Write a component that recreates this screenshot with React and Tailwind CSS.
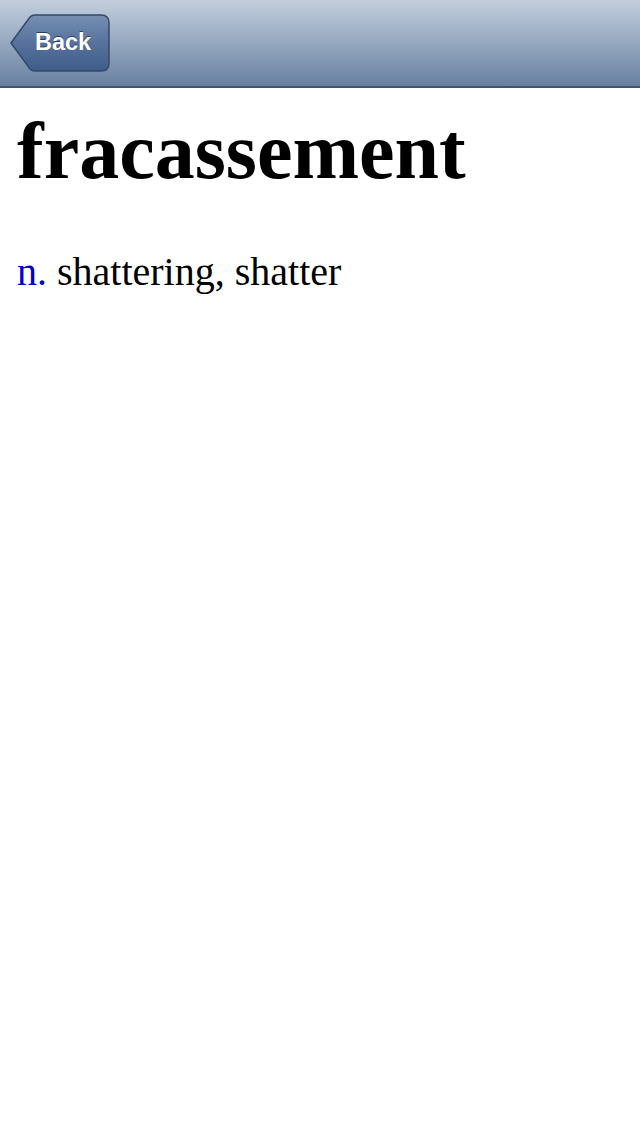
export default function App() {
  return (
    <div className="min-h-screen bg-white">
      <div className="h-[88px] bg-gradient-to-b from-[#c3cedc] via-[#96a8bf] to-[#6880a1] border-b-2 border-[#3e5371] flex items-center pl-[10px]">
        <button className="relative w-[100px] h-[58px] mt-[-1px] text-left">
          <svg className="absolute inset-0" width="100" height="58" viewBox="0 0 100 58">
            <defs>
              <linearGradient id="bk" x1="0" y1="0" x2="0" y2="1">
                <stop offset="0" stopColor="#7690b3" />
                <stop offset="0.5" stopColor="#56729c" />
                <stop offset="1" stopColor="#3f5d8b" />
              </linearGradient>
            </defs>
            <path
              d="M1 29 L20 3 Q22 1 25 1 L91 1 Q99 1 99 9 L99 49 Q99 57 91 57 L25 57 Q22 57 20 55 Z"
              fill="url(#bk)"
              stroke="#34496b"
              strokeWidth="1.5"
            />
          </svg>
          <span
            className="relative block pl-[25px] text-white text-[23.5px] font-bold leading-none [text-shadow:0_-1px_0_rgba(0,0,0,0.5)]"
            style={{ fontFamily: '"Liberation Sans", Arial, sans-serif' }}
          >
            Back
          </span>
        </button>
      </div>
      <div className="px-[17px]" style={{ fontFamily: '"Liberation Serif", "Times New Roman", serif' }}>
        <h1 className="mt-[23px] text-[80px] font-bold leading-[80px] text-black">fracassement</h1>
        <p className="mt-[61px] text-[40px] leading-[40px] text-black">
          <span className="text-[#0000cc]">n.</span> shattering, shatter
        </p>
      </div>
    </div>
  );
}
